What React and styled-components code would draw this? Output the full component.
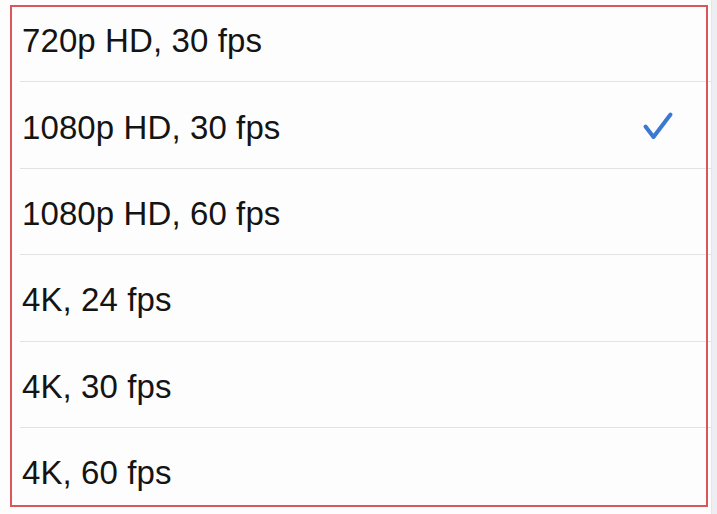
import React from "react";
import styled, { createGlobalStyle } from "styled-components";

const GlobalStyle = createGlobalStyle`
  html, body {
    margin: 0;
    padding: 0;
    background: #ffffff;
    overflow: hidden;
  }
  body {
    font-family: "Liberation Sans", Arial, sans-serif;
  }
`;

const Screen = styled.div`
  position: relative;
  display: flex;
  width: 717px;
  height: 514px;
  overflow: hidden;
  background: #fdfdfd;
`;

const List = styled.ul`
  flex: 1;
  list-style: none;
  margin: -4px 0 0;
  padding: 0;
`;

const Row = styled.li`
  display: flex;
  align-items: center;
  justify-content: space-between;
  height: 86.4px;
  box-sizing: border-box;
  padding: 4px 37px 0 22px;
  position: relative;
  font-size: 33px;
  color: #141414;
  letter-spacing: 0.1px;

  &:not(:last-child)::after {
    content: "";
    position: absolute;
    left: 20px;
    right: 0;
    bottom: 0;
    height: 1px;
    background: #e2e2e4;
  }
`;

const Track = styled.div`
  width: 5px;
  background: #eceef1;
  border-left: 1px solid #e3e5e9;
`;

const Highlight = styled.div`
  position: absolute;
  left: 10px;
  top: 5px;
  width: 698px;
  height: 502px;
  box-sizing: border-box;
  border: 2px solid #d9575b;
  pointer-events: none;
`;

const Check = () => (
  <svg width="32" height="30" viewBox="0 0 32 30" style={{ marginTop: "-4px" }}>
    <path
      d="M3.5 15.5 L11.5 26 L28.5 3.5"
      fill="none"
      stroke="#3a78d4"
      strokeWidth="4"
      strokeLinecap="round"
      strokeLinejoin="round"
    />
  </svg>
);

const options = [
  { label: "720p HD, 30 fps" },
  { label: "1080p HD, 30 fps", selected: true },
  { label: "1080p HD, 60 fps" },
  { label: "4K, 24 fps" },
  { label: "4K, 30 fps" },
  { label: "4K, 60 fps" },
];

export default function App() {
  return (
    <>
      <GlobalStyle />
      <Screen>
        <List>
          {options.map((o) => (
            <Row key={o.label}>
              <span>{o.label}</span>
              {o.selected && <Check />}
            </Row>
          ))}
        </List>
        <Track />
        <Highlight />
      </Screen>
    </>
  );
}
